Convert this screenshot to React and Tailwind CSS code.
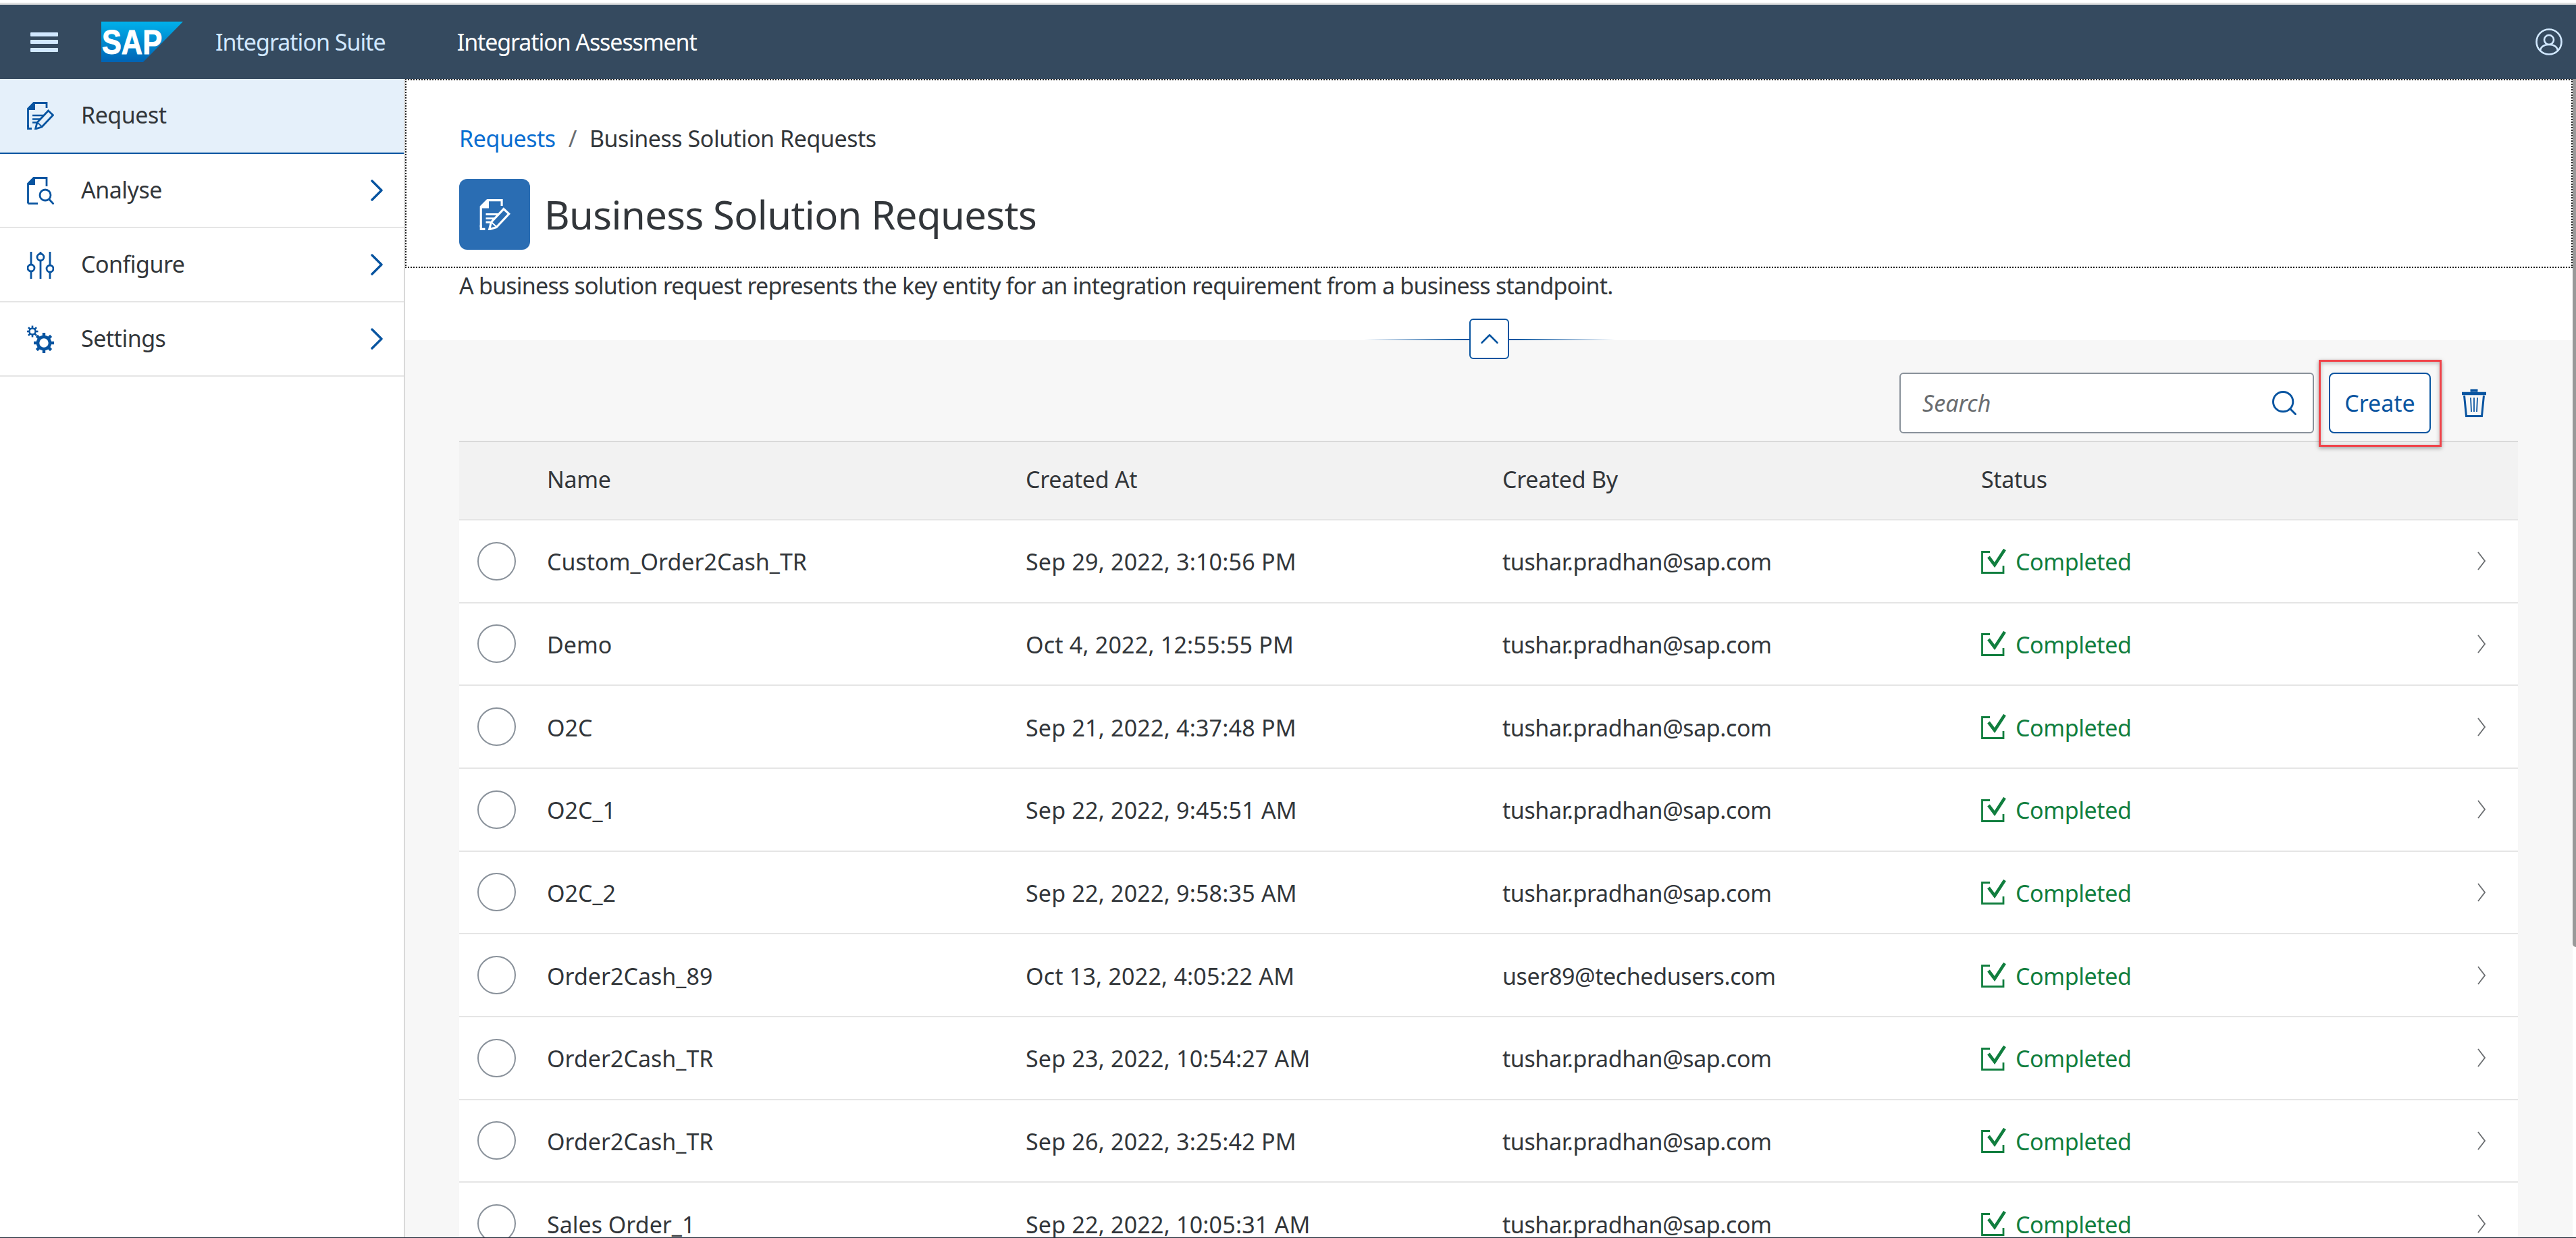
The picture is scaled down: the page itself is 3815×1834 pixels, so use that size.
import { ChevronUp, Search } from "lucide-react";

const rows = [
  ["Custom_Order2Cash_TR", "Sep 29, 2022, 3:10:56 PM", "tushar.pradhan@sap.com"],
  ["Demo", "Oct 4, 2022, 12:55:55 PM", "tushar.pradhan@sap.com"],
  ["O2C", "Sep 21, 2022, 4:37:48 PM", "tushar.pradhan@sap.com"],
  ["O2C_1", "Sep 22, 2022, 9:45:51 AM", "tushar.pradhan@sap.com"],
  ["O2C_2", "Sep 22, 2022, 9:58:35 AM", "tushar.pradhan@sap.com"],
  ["Order2Cash_89", "Oct 13, 2022, 4:05:22 AM", "user89@techedusers.com"],
  ["Order2Cash_TR", "Sep 23, 2022, 10:54:27 AM", "tushar.pradhan@sap.com"],
  ["Order2Cash_TR", "Sep 26, 2022, 3:25:42 PM", "tushar.pradhan@sap.com"],
  ["Sales Order_1", "Sep 22, 2022, 10:05:31 AM", "tushar.pradhan@sap.com"],
];

const RequestIcon = ({ className }) => (
  <svg viewBox="0 0 40 41" className={className} fill="none" stroke="currentColor" strokeWidth="2.8">
    <path d="M1.5 37V10L10 1.5H29V9" />
    <path d="M1 12V9.5L9.5 1H12V12Z" fill="currentColor" stroke="none" />
    <path d="M1.5 34v5.5H7" />
    <path d="M8 20H24M8 25.5H20M8 30.5H14" strokeWidth="2.6" />
    <path d="M12.5 40l2.5-9.5L31.5 13l7 6.5L22 37Z" />
    <path d="M15.5 30.5l6.5 6" strokeWidth="1.8" />
  </svg>
);

const AnalyseIcon = ({ className }) => (
  <svg viewBox="0 0 40 41" className={className} fill="none" stroke="currentColor" strokeWidth="2.8">
    <path d="M1.5 39.5V10L10 1.5H29V14" />
    <path d="M1 12V9.5L9.5 1H12V12Z" fill="currentColor" stroke="none" />
    <path d="M1.5 39.5H16" />
    <circle cx="27" cy="27" r="8" />
    <path d="M32.5 33l7 7.5" />
  </svg>
);

const ConfigureIcon = ({ className }) => (
  <svg viewBox="0 0 40 41" className={className} fill="none" stroke="currentColor" strokeWidth="2.8">
    <path d="M6 1v19M6 30v11M20 1v3M20 14v27M34 1v20M34 31v10" />
    <circle cx="6" cy="25" r="5" />
    <circle cx="20" cy="9" r="5" />
    <circle cx="34" cy="26" r="5" />
  </svg>
);

const Gear = ({ cx, cy, r, teeth, ring, toothWidth }) => (
  <g stroke="currentColor" fill="none">
    <circle cx={cx} cy={cy} r={r} strokeWidth={ring} />
    {[0, 45, 90, 135, 180, 225, 270, 315].map((a) => (
      <path
        key={a}
        d={`M${cx} ${cy - r}V${cy - teeth}`}
        strokeWidth={toothWidth}
        transform={`rotate(${a} ${cx} ${cy})`}
      />
    ))}
  </g>
);

const SettingsIcon = ({ className }) => (
  <svg viewBox="0 0 40 41" className={className}>
    <Gear cx={8} cy={9} r={4.5} teeth={8.5} ring={2.4} toothWidth={2.6} />
    <Gear cx={25} cy={26} r={9} teeth={15} ring={4.6} toothWidth={4.4} />
  </svg>
);

const CheckedIcon = () => (
  <svg viewBox="0 0 37 37" className="w-[37px] h-[37px] shrink-0" fill="none" stroke="#107e3e" strokeWidth="2.8">
    <path d="M13 4.5H1.5V35.5H33V25" />
    <path d="M11 12l9 12L35 1" strokeWidth="4.6" />
  </svg>
);

const TrashIcon = () => (
  <svg viewBox="0 0 36 42" className="w-[36px] h-[42px]" fill="none" stroke="#0854a0">
    <path d="M14 4.5V2H22V4.5" strokeWidth="3" fill="#0854a0" />
    <path d="M0 7H36" strokeWidth="4.4" />
    <path d="M3.5 10L6.5 40.5H29.5L32.5 10" strokeWidth="3" />
    <path d="M13 13l1 21M18 13v21M23 13l-1 21" strokeWidth="1.8" />
  </svg>
);

const SapLogo = () => (
  <svg viewBox="0 0 121 60" className="w-[121px] h-[60px]">
    <defs>
      <linearGradient id="sapBlue" x1="0" y1="0" x2="0" y2="1">
        <stop offset="0" stopColor="#00b1eb" />
        <stop offset="1" stopColor="#0063b4" />
      </linearGradient>
    </defs>
    <polygon points="0,0 121,0 62,60 0,60" fill="url(#sapBlue)" />
    <text
      x="1"
      y="48"
      fontFamily="Liberation Sans"
      fontWeight="700"
      fontSize="50"
      fill="#fff"
      stroke="#fff"
      strokeWidth="1"
      textLength="89"
      lengthAdjust="spacingAndGlyphs"
    >
      SAP
    </text>
  </svg>
);

const NavChevron = () => (
  <svg viewBox="0 0 18 32" className="w-[18px] h-[32px] shrink-0" fill="none" stroke="#0854a0" strokeWidth="3.4" strokeLinecap="round" strokeLinejoin="round">
    <path d="M2 2l14 14L2 30" />
  </svg>
);

const RowChevron = () => (
  <svg viewBox="0 0 12 28" className="w-[12px] h-[28px] shrink-0 mr-[48px]" fill="none" stroke="#6a6d70" strokeWidth="1.8">
    <path d="M1 1l10 13L1 27" />
  </svg>
);

const NavItem = ({ icon: Icon, label, active }) => (
  <div
    className={
      active
        ? "h-[111px] flex items-center bg-[#e5f0fa] border-b-2 border-[#0854a0] pl-[40px] pr-[31px]"
        : "h-[110px] flex items-center border-b-2 border-[#e5e5e5] pl-[40px] pr-[31px]"
    }
  >
    <Icon className="w-[40px] h-[41px] text-[#0854a0] shrink-0" />
    <span className="ml-[40px] flex-1 pb-[2px] tracking-[-0.5px] text-[#32363a]">{label}</span>
    {!active && <NavChevron />}
  </div>
);

const Row = ({ name, date, user }) => (
  <div className="h-[122.67px] shrink-0 flex items-center bg-white border-b-2 border-[#e5e5e5]">
    <div className="w-[130px] pl-[27px]">
      <div className="w-[57px] h-[57px] rounded-full border-2 border-[#89919a] bg-white" />
    </div>
    <div className="w-[709px] truncate pt-[3px]">{name}</div>
    <div className="w-[706px] truncate pt-[3px] tracking-[0.2px]">{date}</div>
    <div className="w-[709px] truncate pt-[3px] tracking-[-0.4px]">{user}</div>
    <div className="flex items-center gap-[14px] text-[#107e3e] flex-1 tracking-[-0.4px]">
      <CheckedIcon />
      <span className="pt-[3px]">Completed</span>
    </div>
    <RowChevron />
  </div>
);

export default function App() {
  return (
    <div className="w-[3815px] h-[1834px] overflow-hidden flex flex-col bg-white text-[34px] text-[#32363a] font-['Noto_Sans','Open_Sans',sans-serif]">
      <div className="h-[4px] shrink-0 bg-white" />
      <div className="h-[3px] shrink-0 bg-[#e0e0e0]" />
      <header className="h-[110px] shrink-0 bg-[#354a5f] flex items-center">
        <div className="ml-[45px] w-[41px] h-[29px] flex flex-col justify-between">
          <span className="h-[6px] rounded-[1px] bg-[#d1e8ff]" />
          <span className="h-[6px] rounded-[1px] bg-[#d1e8ff]" />
          <span className="h-[6px] rounded-[1px] bg-[#d1e8ff]" />
        </div>
        <div className="ml-[64px]">
          <SapLogo />
        </div>
        <span className="ml-[48px] tracking-[-1px] text-[#d1e8ff]">Integration Suite</span>
        <span className="ml-[106px] tracking-[-1.1px] text-white">Integration Assessment</span>
        <svg viewBox="0 0 40 40" className="ml-auto mr-[20px] w-[40px] h-[40px]" fill="none" stroke="#d1e8ff" strokeWidth="2.6">
          <circle cx="20" cy="20" r="18.5" />
          <circle cx="20" cy="17" r="7" />
          <path d="M7 34c0-6 5-10 13-10s13 4 13 10" />
        </svg>
      </header>

      <div className="flex-1 flex min-h-0 border-b border-[#1f2a38]">
        <nav className="w-[600px] shrink-0 border-r-2 border-[#d9d9d9]">
          <NavItem icon={RequestIcon} label="Request" active />
          <NavItem icon={AnalyseIcon} label="Analyse" />
          <NavItem icon={ConfigureIcon} label="Configure" />
          <NavItem icon={SettingsIcon} label="Settings" />
        </nav>

        <main className="flex-1 min-w-0 flex flex-col">
          <section className="h-[280px] shrink-0 border-2 border-dotted border-[#222] pl-[78px] pt-[63px]">
            <div className="leading-[46px] tracking-[-0.45px]">
              <span className="text-[#0a6ed1]">Requests</span>
              <span className="text-[#6a6d70] mx-[19px]">/</span>
              Business Solution Requests
            </div>
            <div className="flex items-center mt-[37px]">
              <div className="w-[105px] h-[105px] rounded-[12px] bg-[#2a6db3] flex items-center justify-center text-white">
                <RequestIcon className="w-[46px] h-[46px]" />
              </div>
              <h1 className="ml-[21px] text-[58px] tracking-[-0.6px] font-normal">Business Solution Requests</h1>
            </div>
          </section>

          <div className="h-[107px] shrink-0 relative pl-[80px] pt-[3px] leading-[46px] tracking-[-0.78px]">
            A business solution request represents the key entity for an integration requirement from a business standpoint.
            <div className="absolute left-[1420px] top-[105px] w-[372px] h-[2px] bg-[linear-gradient(90deg,transparent,#0854a0_40%,#0854a0_60%,transparent)]" />
            <div className="absolute left-[1576px] top-[75px] w-[59px] h-[60px] rounded-[6px] border-2 border-[#0854a0] bg-white flex items-center justify-center z-10">
              <ChevronUp size={46} strokeWidth={1.3} className="text-[#0854a0]" />
            </div>
          </div>

          <div className="flex-1 min-h-0 bg-[#f7f7f7] pl-[80px] pr-[81px] overflow-hidden flex flex-col">
            <div className="h-[149px] shrink-0 flex items-start justify-end pt-[48px] pr-[47px]">
              <div className="w-[614px] h-[90px] rounded-[6px] border-2 border-[#89919a] bg-white flex items-center pl-[32px] pr-[20px] justify-between">
                <span className="italic text-[#6a6d70]">Search</span>
                <Search size={44} strokeWidth={1.6} className="text-[#0854a0]" />
              </div>
              <div className="relative ml-[22px] w-[151px] h-[90px] rounded-[8px] border-2 border-[#0854a0] bg-white text-[#0854a0] flex items-center justify-center">
                Create
                <div className="absolute -left-[17px] -top-[21px] w-[182px] h-[129px] border-[3px] border-[#f0434a] shadow-[0_2px_6px_rgba(0,0,0,0.35),inset_0_2px_6px_rgba(0,0,0,0.25)]" />
              </div>
              <div className="ml-[46px] mt-[24px]">
                <TrashIcon />
              </div>
            </div>

            <div className="h-[118px] shrink-0 flex items-center bg-[#f2f2f2] border-y-2 border-t-[#d9d9d9] border-b-[#e5e5e5] pb-[3px] tracking-[-0.3px]">
              <div className="w-[130px]" />
              <div className="w-[709px]">Name</div>
              <div className="w-[706px]">Created At</div>
              <div className="w-[709px]">Created By</div>
              <div>Status</div>
            </div>

            {rows.map((r, i) => (
              <Row key={i} name={r[0]} date={r[1]} user={r[2]} />
            ))}
          </div>
        </main>

        {/* scrollbar thumb, track is plain white */}
        <div className="w-[5px] shrink-0">
          <div className="h-[1286px] rounded-bl-[5px] bg-[#999999]" />
        </div>
      </div>
    </div>
  );
}
